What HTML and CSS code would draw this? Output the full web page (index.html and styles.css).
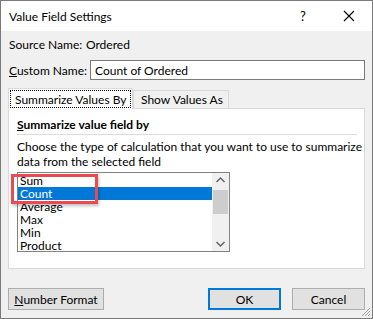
FILE: index.html
```html
<!DOCTYPE html>
<html lang="en">
<head>
  <meta charset="UTF-8">
  <title>Value Field Settings</title>
  <link rel="stylesheet" href="styles.css">
</head>
<body>
  <div class="dialog">
    <div class="titlebar">
      <span class="title">Value Field Settings</span>
      <span class="help">?</span>
      <svg class="close" width="12" height="12" viewBox="0 0 12 12">
        <path d="M1 1 L11 11 M11 1 L1 11" stroke="#000" stroke-width="1.1" fill="none"/>
      </svg>
    </div>

    <div class="content">
      <div class="row">
        <span class="label source-label">Source Name:</span>
        <span>Ordered</span>
      </div>
      <div class="row custom-row">
        <label class="label" for="customName"><u>C</u>ustom Name:</label>
        <input type="text" id="customName" value="Count of Ordered">
      </div>

      <div class="tabs">
        <div class="tab active"><span class="focus">Summarize Values By</span></div>
        <div class="tab">Show Values As</div>
      </div>
      <div class="panel">
        <div class="heading"><u>S</u>ummarize value field by</div>
        <p class="desc">Choose the type of calculation that you want to use to summarize data from the selected field</p>
        <div class="listbox">
          <ul class="items">
            <li>Sum</li>
            <li class="selected">Count</li>
            <li>Average</li>
            <li>Max</li>
            <li>Min</li>
            <li>Product</li>
          </ul>
          <div class="scrollbar">
            <svg class="arrow" width="17" height="14" viewBox="0 0 17 14">
              <polyline points="4.5,9 8.5,5 12.5,9" stroke="#606060" stroke-width="1.4" fill="none"/>
            </svg>
            <div class="track"><div class="thumb"></div></div>
            <svg class="arrow" width="17" height="14" viewBox="0 0 17 14">
              <polyline points="4.5,5 8.5,9 12.5,5" stroke="#606060" stroke-width="1.4" fill="none"/>
            </svg>
          </div>
          <div class="callout"></div>
        </div>
      </div>

      <div class="buttons">
        <button class="btn wide"><u>N</u>umber Format</button>
        <div class="spacer"></div>
        <button class="btn default">OK</button>
        <button class="btn">Cancel</button>
      </div>
    </div>

    <svg class="grip" width="11" height="11" viewBox="0 0 11 11">
      <path d="M10 2 L2 10 M10 5 L5 10 M10 8 L8 10" stroke="#a0a0a0" stroke-width="1" fill="none"/>
    </svg>
  </div>
</body>
</html>
```

FILE: styles.css
```css
body {
  margin: 0;
  font-family: Lato, "Liberation Sans", sans-serif;
  font-size: 12px;
  color: #000;
}

.dialog {
  position: relative;
  width: 373px;
  height: 319px;
  box-sizing: border-box;
  border: 1px solid #7a7a7a;
  background-color: #f0f0f0;
}

.titlebar {
  display: flex;
  align-items: center;
  height: 30px;
  background-color: #fff;
  padding-left: 8px;
}

.title {
  flex: 1;
  font-size: 12px;
}

.help {
  width: 14px;
  margin-right: 29px;
  font-size: 13px;
}

.close {
  margin-right: 17px;
}

.content {
  padding: 3px 7px 0 7px;
}

.row {
  display: flex;
  align-items: center;
  height: 20px;
  white-space: nowrap;
}

.label {
  flex-shrink: 0;
  width: 82px;
  padding-left: 1px;
  box-sizing: border-box;
}

.source-label {
  width: 78px;
}

.custom-row {
  margin-top: 6px;
}

input[type="text"] {
  width: 276px;
  height: 20px;
  box-sizing: border-box;
  border: 1px solid #7a7a7a;
  padding: 0 4px;
  font-family: inherit;
  font-size: 12px;
  background-color: #fff;
}

.tabs {
  display: flex;
  align-items: flex-end;
  margin-top: 8px;
  height: 20px;
  white-space: nowrap;
}

.tab {
  box-sizing: border-box;
  width: 96px;
  height: 18px;
  padding: 0 7px;
  border: 1px solid #d9d9d9;
  border-bottom: none;
  display: flex;
  align-items: center;
  background-color: #f0f0f0;
}

.tab.active {
  height: 21px;
  margin-bottom: -1px;
  width: 125px;
  background-color: #fff;
  padding: 0 2px;
  position: relative;
  z-index: 1;
}

.focus {
  display: block;
  width: 100%;
  box-sizing: border-box;
  padding: 1px 4px 0 4px;
  line-height: 15px;
  outline: 1px dotted #000;
}

.panel {
  height: 161px;
  box-sizing: border-box;
  border: 1px solid #d9d9d9;
  background-color: #fff;
  padding: 8px 7px 0 8px;
}

.heading {
  font-weight: bold;
  line-height: 16px;
  padding-bottom: 1px;
  border-bottom: 1px solid #dcdcdc;
}

.desc {
  margin: 4px -6px 0 0;
  line-height: 15px;
}

.listbox {
  position: relative;
  display: flex;
  width: 213px;
  height: 80px;
  box-sizing: border-box;
  margin-top: 3px;
  border: 1px solid #828282;
}

.items {
  flex: 1;
  list-style: none;
  margin: 0;
  padding: 1px 0 0 0;
  overflow: hidden;
}

.items li {
  height: 13px;
  line-height: 13px;
  padding-left: 2px;
}

.items li.selected {
  background-color: #0078d7;
  color: #fff;
}

.scrollbar {
  width: 17px;
  display: flex;
  flex-direction: column;
  background-color: #f0f0f0;
}

.track {
  flex: 1;
}

.thumb {
  height: 24px;
  margin: 3px 1px 0 1px;
  background-color: #cdcdcd;
}

.callout {
  position: absolute;
  left: -7px;
  top: 1px;
  width: 81px;
  height: 24px;
  border: 3px solid #ea4a52;
  box-shadow: 1px 2px 3px rgba(0, 0, 0, 0.25);
}

.buttons {
  display: flex;
  margin-top: 19px;
  gap: 11px;
}

.spacer {
  flex: 1;
}

.btn {
  width: 73px;
  height: 22px;
  box-sizing: border-box;
  border: 1px solid #adadad;
  background-color: #e1e1e1;
  font-family: inherit;
  font-size: 12px;
  color: #000;
  padding: 0;
}

.btn.wide {
  width: 96px;
}

.btn.default {
  border: 2px solid #0078d7;
}

.grip {
  position: absolute;
  right: 1px;
  bottom: 1px;
}
```
